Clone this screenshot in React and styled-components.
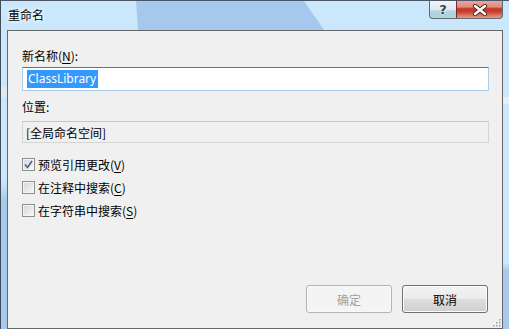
import React from 'react'
import styled, { createGlobalStyle } from 'styled-components'

const GlobalStyle = createGlobalStyle`
  html, body {
    margin: 0;
    padding: 0;
    background: #cbe7fb;
  }
  body {
    font-family: "Noto Sans", "Noto Sans CJK SC", sans-serif;
    font-size: 12px;
    color: #000;
  }
`

const options = [
  { label: '预览引用更改', key: 'V', checked: true },
  { label: '在注释中搜索', key: 'C', checked: false },
  { label: '在字符串中搜索', key: 'S', checked: false },
]

const CheckMark = () => (
  <svg width="9" height="9" viewBox="0 0 9 9">
    <path d="M1 4.5 L3.5 7.5 L8 1" fill="none" stroke="#4a6089" strokeWidth="1.6" />
  </svg>
)

const CloseGlyph = () => (
  <svg width="16" height="12" viewBox="0 0 16 12">
    <path d="M3 2 L13 10 M13 2 L3 10" stroke="#5a2320" strokeWidth="4.2" strokeLinecap="round" />
    <path d="M3 2 L13 10 M13 2 L3 10" stroke="#ffffff" strokeWidth="2.4" strokeLinecap="round" />
  </svg>
)

const Grip = () => (
  <svg width="9" height="9" viewBox="0 0 9 9">
    {[[7, 1], [4, 4], [7, 4], [1, 7], [4, 7], [7, 7]].map(([x, y]) => (
      <rect key={`${x}-${y}`} x={x} y={y} width="1.5" height="1.5" fill="#a0a0a0" />
    ))}
  </svg>
)

export default function App() {
  return (
    <>
      <GlobalStyle />
      <Window>
        <TitleBar>
          <Title>重命名</Title>
          <Captions>
            <HelpButton>?</HelpButton>
            <CloseButton><CloseGlyph /></CloseButton>
          </Captions>
        </TitleBar>
        <Client>
          <Label>新名称(<u>N</u>):</Label>
          <TextBox>
            <Selected>ClassLibrary</Selected>
          </TextBox>
          <Label $gap={7}>位置:</Label>
          <ReadOnlyBox>[全局命名空间]</ReadOnlyBox>
          <Options>
            {options.map(opt => (
              <OptionRow key={opt.key}>
                <Box>{opt.checked && <CheckMark />}</Box>
                <span>{opt.label}(<u>{opt.key}</u>)</span>
              </OptionRow>
            ))}
          </Options>
          <Buttons>
            <Button disabled>确定</Button>
            <Button>取消</Button>
          </Buttons>
          <GripArea><Grip /></GripArea>
        </Client>
      </Window>
    </>
  )
}

const Window = styled.div`
  width: 509px;
  height: 329px;
  box-sizing: border-box;
  display: flex;
  flex-direction: column;
  overflow: hidden;
  border-left: 1px solid #3f4e5e;
  border-top: 1px solid #4b5764;
  background:
    linear-gradient(to bottom, transparent 180px, #a9c9ea 200px, #a9c9ea 100%) left / 7px 100% no-repeat,
    linear-gradient(to bottom, transparent 85px, #dfe9f0 85px, #dfe9f0 96px, transparent 96px) left / 7px 100% no-repeat,
    linear-gradient(to bottom, transparent 96px, #e8eef2 96px, #e8eef2 103px, transparent 103px, transparent 262px, #a9c9ea 270px) right / 6px 100% no-repeat,
    #cbe7fb;
`

const TitleBar = styled.div`
  height: 29px;
  flex: none;
  display: flex;
  align-items: flex-start;
  position: relative;
  &::before {
    content: '';
    position: absolute;
    top: 0;
    bottom: 0;
    left: 135px;
    width: 190px;
    background: #a7c8ed;
    clip-path: polygon(0 0, 168px 0, 188px 100%, 2px 100%);
  }
`

const Title = styled.div`
  position: relative;
  padding: 5px 0 0 7px;
  font-family: "Noto Sans CJK SC", sans-serif;
  font-size: 12px;
  line-height: 17px;
  text-shadow: 0 0 6px #ffffff, 0 0 3px #ffffff;
`

const Captions = styled.div`
  position: relative;
  margin-left: auto;
  margin-right: 6px;
  display: flex;
`

const CaptionButton = styled.div`
  height: 18px;
  box-sizing: border-box;
  border: 1px solid #5e6b79;
  border-top: none;
  display: flex;
  align-items: center;
  justify-content: center;
`

const HelpButton = styled(CaptionButton)`
  width: 27px;
  border-right: none;
  border-bottom-left-radius: 4px;
  background: linear-gradient(to bottom, #eef5fb 0%, #dfeaf3 50%, #c3d8e6 55%, #a9d0dd 80%, #b7dbd8 100%);
  font-family: "DejaVu Sans", sans-serif;
  font-weight: bold;
  font-size: 13px;
  color: #3a3f45;
  text-shadow: 0 0 2px #fff, 0 0 1px #fff;
`

const CloseButton = styled(CaptionButton)`
  width: 47px;
  border-bottom-right-radius: 4px;
  border-left: 1px solid #7a2a24;
  background: linear-gradient(to bottom, #e9a89c 0%, #e08a7c 35%, #c8392b 45%, #c23a2c 60%, #d86b55 80%, #e3a084 100%);
`

const Client = styled.div`
  position: relative;
  flex: 1;
  margin: 0 6px 0 6px;
  border: 1px solid #676767;
  background: #f0f0f0;
  display: flex;
  flex-direction: column;
  padding: 16px 13px 15px 14px;
  font-family: "Noto Sans", "Noto Sans CJK SC", sans-serif;
`

const Label = styled.div`
  margin-top: ${p => p.$gap || 0}px;
  line-height: 17px;
  height: 17px;
  font-family: "Noto Sans CJK SC", sans-serif;
  u { text-underline-offset: 2px; }
`

const TextBox = styled.div`
  margin-top: 3px;
  height: 24px;
  box-sizing: border-box;
  border: 1px solid #a9cdea;
  border-top-color: #3c7db4;
  background: #fff;
  display: flex;
  align-items: center;
  padding-left: 4px;
`

const Selected = styled.span`
  background: #3399ff;
  color: #fff;
  line-height: 18px;
  padding: 0 1px 0 1px;
  border-right: 1px solid #d0701c;
`

const ReadOnlyBox = styled.div`
  margin-top: 6px;
  height: 22px;
  box-sizing: border-box;
  border: 1px solid #d4d4d4;
  border-top-color: #c5c5c5;
  background: #f0f0f0;
  display: flex;
  align-items: center;
  padding-left: 3px;
  font-family: "Noto Sans CJK SC", sans-serif;
`

const Options = styled.div`
  margin-top: 10px;
  display: flex;
  flex-direction: column;
`

const OptionRow = styled.div`
  height: 23px;
  display: flex;
  align-items: center;
  gap: 3px;
  font-family: "Noto Sans CJK SC", sans-serif;
  u { text-underline-offset: 2px; }
`

const Box = styled.div`
  width: 13px;
  height: 13px;
  box-sizing: border-box;
  border: 1px solid #8e8f8f;
  box-shadow: inset 0 0 0 1px #f4f4f4;
  background: linear-gradient(135deg, #d6d6d6 0%, #e6e6e6 50%, #fbfbfb 100%);
  display: flex;
  align-items: center;
  justify-content: center;
`

const Buttons = styled.div`
  margin-top: auto;
  display: flex;
  justify-content: flex-end;
  gap: 10px;
  padding-right: 1px;
`

const Button = styled.button`
  width: 86px;
  height: 28px;
  box-sizing: border-box;
  border-radius: 3px;
  font-family: "Noto Sans CJK SC", sans-serif;
  font-size: 12px;
  padding: 0;
  border: 1px solid #707070;
  box-shadow: inset 0 0 0 1px #fcfcfc;
  background: linear-gradient(to bottom, #f3f3f3 0%, #ebebeb 48%, #dddddd 52%, #cfcfcf 100%);
  color: #000;
  &:disabled {
    border-color: #b2b5b8;
    box-shadow: inset 0 0 0 1px #f8f8f8;
    background: #f4f4f4;
    color: #a0a0a0;
  }
`

const GripArea = styled.div`
  position: absolute;
  right: 1px;
  bottom: 1px;
  line-height: 0;
`
